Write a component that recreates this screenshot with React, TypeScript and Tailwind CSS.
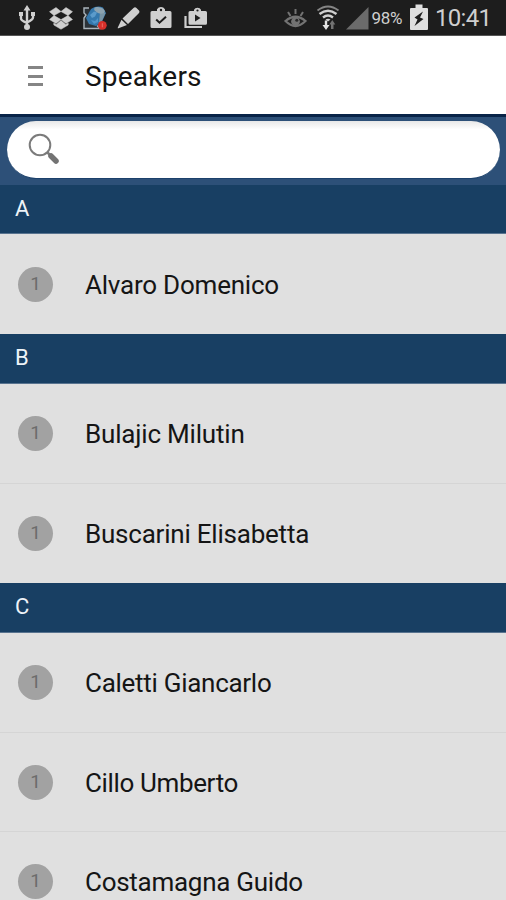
import type { ReactNode } from "react";

type Person = { name: string; tracking: string; height: string };
type Section = { letter: string; height: string; people: Person[] };

const sections: Section[] = [
  {
    letter: "A",
    height: "h-[49px]",
    people: [{ name: "Alvaro Domenico", tracking: "tracking-[-0.22px]", height: "h-[100px]" }],
  },
  {
    letter: "B",
    height: "h-[50px]",
    people: [
      { name: "Bulajic Milutin", tracking: "tracking-[-0.19px]", height: "h-[100px]" },
      { name: "Buscarini Elisabetta", tracking: "tracking-[-0.22px]", height: "h-[99px]" },
    ],
  },
  {
    letter: "C",
    height: "h-[50px]",
    people: [
      { name: "Caletti Giancarlo", tracking: "tracking-[-0.28px]", height: "h-[100px]" },
      { name: "Cillo Umberto", tracking: "tracking-[-0.36px]", height: "h-[99px]" },
      { name: "Costamagna Guido", tracking: "tracking-[-0.27px]", height: "h-[99px]" },
    ],
  },
];

function Icon({ className, box, children }: { className: string; box: string; children: ReactNode }) {
  return (
    <svg className={`shrink-0 ${className}`} viewBox={box} fill="none">
      {children}
    </svg>
  );
}

function StatusBar() {
  return (
    <div className="flex h-9 shrink-0 items-start border-b border-[#555] bg-[#1d1d1d] text-[#cfcfcf]">
      {/* usb */}
      <Icon className="ml-[18px] mt-[5px] h-[26px] w-[18px]" box="0 0 18 26">
        <path d="M9 4v18M3 9v4.500q0 2 6 4.500M15 9v3.500q0 2-6 5" stroke="currentColor" strokeWidth="2.400" />
        <path d="M9 0l3.500 5.500h-7zM1 7h4v4H1zM13 7h4v4h-4z" fill="currentColor" />
        <circle cx="9" cy="22" r="3" fill="currentColor" />
      </Icon>
      {/* dropbox */}
      <Icon className="ml-[13px] mt-[7px] h-[23px] w-[24px]" box="0 0 24 23">
        <path
          d="M7 0.500L0.500 4.700L5 8.600L12 4.500zM17 0.500L23.500 4.700L19 8.600L12 4.500zM5 8.600L0.500 12.500L7 16.500L12 12.600zM19 8.600L23.500 12.500L17 16.500L12 12.600zM12 13.500L7.200 17.500L4.800 16V18L12 22.300L19.200 18V16L16.800 17.500z"
          fill="currentColor"
          stroke="currentColor"
          strokeWidth="0.500"
        />
      </Icon>
      {/* globe on a page, with alert */}
      <Icon className="ml-[9px] mt-[6px] h-[24px] w-[26px]" box="0 0 26 24">
        <path d="M7 2H2v5l2 2-2 3v10.500h16l-3-3" fill="#2b3238" stroke="#aab4bb" strokeWidth="1.400" />
        <path d="M9 3Q15-1 21 1.500L24 7l-4 8.500-6 4.500-7-2-3-6z" fill="#3478ad" />
        <path d="M18 6l5.500 1-3.500 8-3 2z" fill="#7894a5" />
        <path d="M8 9l4-3.500 3 1-2 4-3 1.500z" fill="#5b9bcb" />
        <path d="M9 14l4 1 3-3v4l-4 2z" fill="#4f94c8" />
        <ellipse cx="17.500" cy="4.300" rx="5.500" ry="3" fill="#8da3b0" transform="rotate(18 17.500 4.300)" />
        <circle cx="20.300" cy="19.300" r="4.400" fill="#d6302a" />
        <path d="M20.300 17.300v4" stroke="#ec6d66" />
      </Icon>
      {/* pencil */}
      <Icon className="ml-[9px] mt-[7px] h-[22px] w-[24px]" box="0 0 24 22">
        <path d="M5.500 11.500L16.500 1Q18-.4 19.500 1L22 3.500Q23 5 21.800 6.200L11 17zM4.500 12.700l5.500 5.300-8.500 3.200q-1 .3-.7-.7z" fill="currentColor" />
      </Icon>
      {/* clipboard */}
      <Icon className="ml-[9px] mt-[6px] h-[24px] w-[22px]" box="0 0 22 24">
        <path d="M2 5h5V3.200Q8.500 1 11 1t4 2.200V5h5q1.500 0 1.500 1.500v14Q21.500 22 20 22H2Q.5 22 .5 20.500v-14Q.5 5 2 5z" fill="currentColor" />
        <circle cx="11" cy="4" r="1.200" fill="#1d1d1d" />
        <path d="M6.200 13.500l3.300 3.200 6.500-6" stroke="#1d1d1d" strokeWidth="2" />
      </Icon>
      {/* media bag */}
      <Icon className="ml-[12px] mt-[7px] h-[22px] w-[24px]" box="0 0 24 22">
        <path d="M1.500 9v11H18" stroke="currentColor" strokeWidth="2.200" />
        <path d="M6 4h4V2.800Q11 .8 13.500 .8T17 2.800V4h4.500Q23 4 23 5.500v10.800q0 1.500-1.500 1.500H6q-1.500 0-1.500-1.500V5.500Q4.500 4 6 4z" fill="currentColor" />
        <circle cx="13.500" cy="3.500" r="1.100" fill="#1d1d1d" />
        <path d="M11 7.500v7l5.500-3.500z" fill="#1d1d1d" />
      </Icon>

      {/* smart stay eye */}
      <Icon className="ml-[76px] mt-[9px] h-[20px] w-[23px]" box="0 0 23 20">
        <path d="M1.500 12Q11.500 3.500 21.500 12 11.500 22 1.500 12z" stroke="#737373" strokeWidth="2.200" />
        <path d="M11.500 0v5M4 3l2.500 4M19 3l-2.500 4" stroke="#737373" strokeWidth="2" />
        <circle cx="11.500" cy="12.500" r="4.400" fill="#737373" />
        <circle cx="12.800" cy="11.300" r="1.500" fill="#292929" />
      </Icon>
      {/* wifi, outermost arc dimmed */}
      <Icon className="ml-[9px] mt-[5px] h-[26px] w-[24px]" box="0 0 24 26">
        <path d="M1.500 5.500Q12-2.500 22.500 5.500" stroke="#858585" strokeWidth="2" />
        <path d="M3.500 9Q12 2.500 20.500 9M7 12.500Q12 8.500 17 12.500" stroke="currentColor" strokeWidth="2.400" />
        <path d="M9.500 14.500Q12 13 14.500 14.500L12 16.500z" fill="currentColor" />
        <path d="M8.800 15.500v4.500H6.500l3.500 5 3.500-5h-2.300v-4.500z" fill="#e4e4e4" />
        <path d="M15 24v-4.500h-1.700l3-4.500 3 4.500h-1.800V24z" fill="#737373" />
      </Icon>
      {/* signal */}
      <Icon className="ml-[5.5px] mt-[7px] h-[23px] w-[23px]" box="0 0 23 23">
        <path d="M22.500 0v22.500H0z" fill="#6b6b6b" />
      </Icon>
      <span className="ml-[3px] mt-[7px] w-[32px] whitespace-nowrap text-[17px] leading-[22px] tracking-[-0.3px]">98%</span>
      {/* battery */}
      <Icon className="ml-[6px] mt-[4px] h-[27px] w-[18px]" box="0 0 18 27">
        <path d="M5.500 0.500h7v3.500H17q1 0 1 1v20q0 1-1 1H1q-1 0-1-1V5q0-1 1-1h4.500z" fill="#dedede" />
        <path d="M13 7.500L4.500 13.500l3 2L4.500 22 13.500 15l-3.500-1.500z" fill="#1d1d1d" />
      </Icon>
      <span className="ml-[7.5px] mt-[5px] whitespace-nowrap text-[24px] leading-[26px] tracking-[-0.7px]">10:41</span>
    </div>
  );
}

function SearchBar() {
  return (
    <div className="h-[71px] shrink-0 border-t-[3px] border-[#092448] bg-[#2d5078] px-[7px] pt-[4px]">
      <div className="flex h-[58px] w-[493px] items-start rounded-full border-b border-[#1c416b] bg-linear-to-b from-[#e8e8e8] via-white via-15% to-white">
        <Icon className="ml-[21px] mt-[12px] h-[32px] w-[32px]" box="0 0 32 32">
          <circle cx="12" cy="12" r="10.300" stroke="#7b7b7b" strokeWidth="2" />
          <path d="M19.500 19.500l3 3" stroke="#7b7b7b" strokeWidth="2.500" />
          <path d="M23 23l5 5" stroke="#737373" strokeWidth="5.500" strokeLinecap="round" />
        </Icon>
      </div>
    </div>
  );
}

export default function App() {
  return (
    <div className="flex h-[900px] w-[506px] flex-col overflow-hidden bg-[#e0e0e0] font-['Roboto',sans-serif] text-[#151515]">
      <StatusBar />
      <header className="flex h-[78px] shrink-0 items-center bg-white">
        <div className="ml-[28px] mt-[2px] flex w-[15px] flex-col gap-[5.5px]">
          <div className="h-[3px] bg-[#858585]" />
          <div className="h-[3px] bg-[#858585]" />
          <div className="h-[3px] bg-[#858585]" />
        </div>
        <h1 className="ml-[42px] mt-[3px] text-[28px] leading-8 tracking-[0.2px]">Speakers</h1>
      </header>
      <SearchBar />
      {sections.map((section) => (
        <section key={section.letter} className="shrink-0">
          <h2 className={`${section.height} border-b border-[#58738f] bg-[#183f63] pl-[15px] text-[22px] leading-[48px] text-[#eef3f8]`}>
            {section.letter}
          </h2>
          <ul className="divide-y divide-[#d5d5d5]">
            {section.people.map((person) => (
              <li key={person.name} className={`flex items-center ${person.height}`}>
                <span className="ml-[18px] flex size-[35px] items-center justify-center rounded-full bg-[#a2a2a2] text-[19px] text-[#6c6c6c]">
                  1
                </span>
                <span className={`ml-[32px] mt-[2px] whitespace-nowrap text-[26px] ${person.tracking}`}>{person.name}</span>
              </li>
            ))}
          </ul>
        </section>
      ))}
    </div>
  );
}
